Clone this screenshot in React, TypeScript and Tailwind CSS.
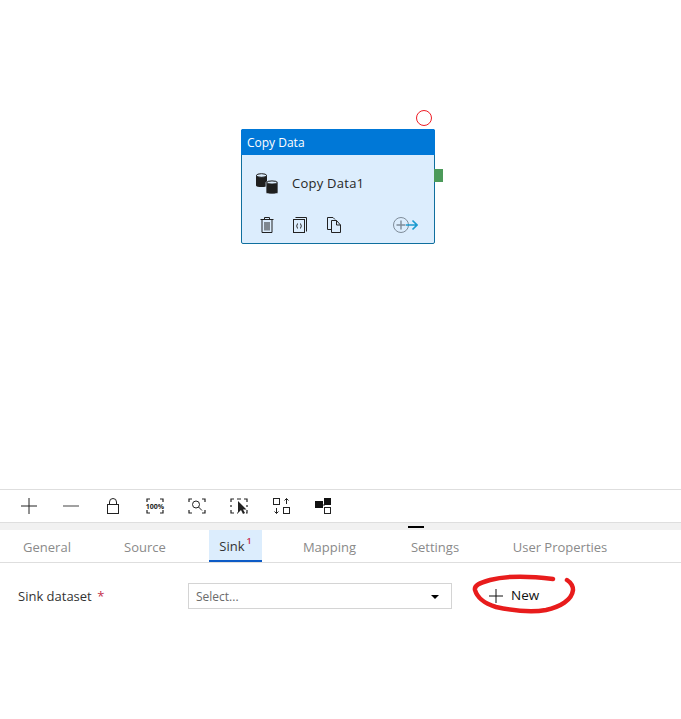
import React from 'react';

const restTabs = [
  { label: 'Mapping', width: 'w-[135px]' },
  { label: 'Settings', width: 'w-[76px]' },
  { label: 'User Properties', width: 'w-[174px]' },
];

function Icon({ children, w = 24 }: { children: React.ReactNode; w?: number }) {
  return (
    <svg width={w} height={24} viewBox="0 0 24 24" fill="none" stroke="#222" strokeWidth="1">
      {children}
    </svg>
  );
}

function Corners() {
  return <path d="M4 8V5h3M17 5h3v3M20 16v3h-3M7 19H4v-3" strokeWidth="1.2" />;
}

function CopyNode() {
  return (
    <div className="absolute left-[241px] top-[129px] w-[194px] h-[115px] rounded-[2px] border border-[#0f6f9e] bg-[#dcedfd]">
      <div className="h-[26px] -mx-px -mt-px pt-[2px] bg-[#0078d7] rounded-t-[2px] px-[6px] flex items-center text-white text-[12px]">
        Copy Data
      </div>
      <div className="flex items-center h-[56px] pl-[12px] gap-[12px] text-[13px] text-[#262626]">
        <svg width="26" height="24" viewBox="0 0 26 24">
          <path d="M2 4.5C2 2.6 13 2.6 13 4.5V14.5C13 16.5 2 16.5 2 14.5Z" fill="#1f1f1f" />
          <ellipse cx="7.5" cy="4.5" rx="5" ry="1.8" fill="#dcedfd" stroke="#1f1f1f" />
          <path d="M12 11.5C12 9.4 24 9.4 24 11.5V21.5C24 23.6 12 23.6 12 21.5Z" fill="#1f1f1f" stroke="#dcedfd" strokeWidth="0.7" />
          <ellipse cx="18" cy="11.5" rx="5.2" ry="1.6" fill="#dcedfd" stroke="#1f1f1f" />
        </svg>
        <span className="tracking-[0.25px] mt-[2px]">Copy Data1</span>
      </div>
      <div className="flex items-center pl-[17px] pr-[16px] h-[28px]">
        <svg width="16" height="18" viewBox="0 0 16 18" fill="none" stroke="#222" strokeWidth="1">
          <path d="M1.5 3.5h13M5.5 3.5V1.5h5v2M3 3.5V16.5h10V3.5M6 6v8.5M8 6v8.5M10 6v8.5" />
        </svg>
        <svg className="ml-[17px]" width="16" height="18" viewBox="0 0 16 18" fill="none" stroke="#222" strokeWidth="1">
          <path d="M3.5 1.5h11v14" />
          <rect x="1.5" y="3.5" width="11" height="13" />
          <path d="M6 7.5C4.8 7.5 5.5 10 4.5 10C5.5 10 4.8 12.5 6 12.5M8 7.5C9.2 7.5 8.5 10 9.5 10C8.5 10 9.2 12.5 8 12.5" />
        </svg>
        <svg className="ml-[18px]" width="16" height="18" viewBox="0 0 16 18" fill="none" stroke="#222" strokeWidth="1">
          <path d="M5 13.5H1.5V1.5H7L9 3.5" />
          <path d="M5.5 4.5H10.5L14.5 9V16.5H5.5ZM10.5 4.5V9H14.5" />
        </svg>
        <svg className="ml-auto" width="26" height="18" viewBox="0 0 26 18" fill="none">
          <circle cx="9" cy="9" r="7.5" stroke="#7f8c99" />
          <path d="M9 4.5v9M4.5 9h9" stroke="#7f8c99" strokeWidth="1.4" />
          <path d="M14 9h11M20.5 4.5 25 9l-4.5 4.5" stroke="#1a9bd0" strokeWidth="1.6" />
        </svg>
      </div>
      <div className="absolute left-full top-[39px] w-[9px] h-[13px] bg-[#4c9a5a]" />
      <div className="absolute left-[174px] -top-[20px] w-[16px] h-[16px] rounded-full border border-[#ee1c25]" />
    </div>
  );
}

export default function App() {
  return (
    <div className="w-[681px] h-[719px] bg-white overflow-hidden relative font-['Open_Sans','Noto_Sans',sans-serif]">
      <div className="relative h-[489px]">
        <CopyNode />
      </div>

      <div className="h-[34px] border-y border-[#dedede] flex items-center pl-[17px] gap-[18px]">
        <Icon>
          <path d="M12 4v16M4 12h16" />
        </Icon>
        <Icon>
          <path d="M4 12h16" stroke="#8a8a8a" strokeWidth="1.6" />
        </Icon>
        <Icon>
          <rect x="6.5" y="10.5" width="11" height="9" />
          <path d="M8.5 10.5V8a3.5 3.5 0 0 1 7 0v2.5" />
        </Icon>
        <Icon>
          <Corners />
          <text x="12" y="14.5" textAnchor="middle" fontSize="7" fontWeight="700" fill="#222" stroke="none">
            100%
          </text>
        </Icon>
        <Icon>
          <Corners />
          <circle cx="11" cy="10.5" r="3.5" />
          <path d="m13.5 13 3.5 3.5" />
        </Icon>
        <Icon>
          <path d="M4 8V5h3M10 5h4M17 5h3v3M20 11v2M20 16v3h-1M4 11v2M4 16v3h3M10 19h1" strokeWidth="1.2" />
          <path d="M11 7v12l3-3 2 4 2-1-2-3.6h3.5Z" fill="#222" stroke="none" />
        </Icon>
        <Icon>
          <rect x="4.5" y="4.5" width="6" height="6" />
          <rect x="14.5" y="13.5" width="6" height="6" />
          <path d="M17.5 10V4.5M15.5 6.5l2-2 2 2M7.5 14v5.5M5.5 17.5l2 2 2-2" />
        </Icon>
        <Icon>
          <rect x="4" y="7" width="8" height="7" fill="#111" stroke="none" />
          <rect x="13" y="4" width="7" height="7" fill="#111" stroke="none" />
          <rect x="13.5" y="13.5" width="6" height="6" />
          <path d="M12 11h2" />
        </Icon>
      </div>

      <div className="relative h-[7px] bg-[#f1f1f1]">
        <div className="absolute left-[408px] top-[3px] w-[16px] h-[2px] bg-black" />
      </div>

      <div className="flex h-[33px] border-b border-[#dedede] text-[13px] text-[#8a8a8a]">
        <div className="w-[94px] h-[32px] pt-[3px] flex items-center justify-center">General</div>
        <div className="w-[102px] h-[32px] pt-[3px] flex items-center justify-center">Source</div>
        <div className="w-[53px] h-[32px] pt-[3px] ml-[13px] bg-[#dcedfd] border-b-2 border-[#0d5bc6] flex items-center justify-center text-[#333]">
          Sink<sup className="text-[9px] font-semibold text-[#c8274a] ml-[2px] -mt-[2px]">1</sup>
        </div>
        {restTabs.map((t) => (
          <div key={t.label} className={`${t.width} h-[32px] pt-[3px] flex items-center justify-center`}>
            {t.label}
          </div>
        ))}
      </div>

      <div className="flex items-center h-[25px] mt-[20px] pl-[18px] text-[13px] text-[#333]">
        <span className="w-[170px] pt-[2px]">
          Sink dataset <span className="text-[#c4314b] ml-[2px]">*</span>
        </span>
        <div className="w-[264px] h-[26px] border border-[#d4d4d4] flex items-center pl-[7px] pr-[12px] pt-[3px] text-[12px] text-[#6b6b6b]">
          Select...
          <span className="ml-auto w-0 h-0 border-x-[4px] border-x-transparent border-t-[4px] border-t-black" />
        </div>
        <div className="flex items-center gap-[7px] ml-[36px] text-[#111]">
          <svg width="16" height="16" viewBox="0 0 16 16" fill="none" stroke="#111" strokeWidth="1">
            <path d="M8 1v14M1 8h14" />
          </svg>
          <span className="font-medium text-[13.5px]">New</span>
        </div>
      </div>

      <svg className="absolute left-0 top-0 pointer-events-none" width="681" height="719" fill="none">
        <path
          d="M553 579C530 576 505 576 490 580C480 583 474 585 475 590C477 597 483 603 496 607C510 610 530 613 546 610C560 607 572 600 573 590C573 585 570 582 567 580"
          stroke="#e81c1c"
          strokeWidth="4.5"
          strokeLinecap="round"
        />
      </svg>
    </div>
  );
}
